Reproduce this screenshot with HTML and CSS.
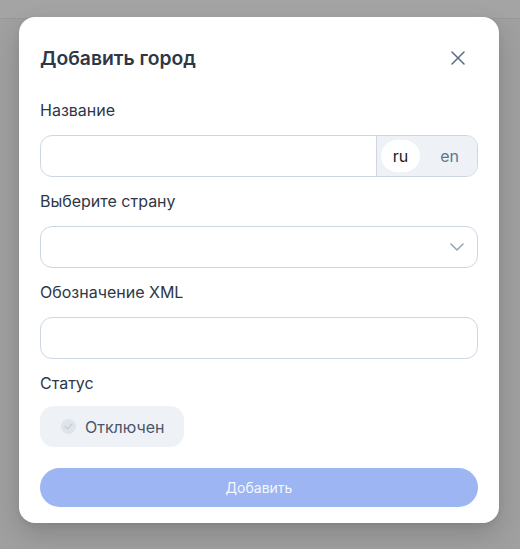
FILE: index.html
```html
<!DOCTYPE html>
<html lang="ru">
<head>
<meta charset="utf-8">
<link rel="stylesheet" href="styles.css">
</head>
<body>
<div class="page">
  <div class="page-header"></div>
</div>
<div class="overlay">
  <div class="modal">
    <div class="modal-head">
      <h2 class="modal-title">Добавить город</h2>
      <button class="close" aria-label="Закрыть">
        <svg width="14" height="14" viewBox="0 0 14 14"><path d="M1 1L13 13M13 1L1 13" stroke="#5b6b85" stroke-width="1.5" stroke-linecap="round"/></svg>
      </button>
    </div>

    <div class="field">
      <label class="label">Название</label>
      <div class="control control-lang">
        <input class="text-input" type="text">
        <div class="lang">
          <span class="lang-pill active">ru</span>
          <span class="lang-pill">en</span>
        </div>
      </div>
    </div>

    <div class="field">
      <label class="label">Выберите страну</label>
      <div class="control control-select">
        <svg class="chevron" width="14" height="8" viewBox="0 0 14 8"><path d="M1 1L7 7L13 1" fill="none" stroke="#94a3b8" stroke-width="1.5" stroke-linecap="round" stroke-linejoin="round"/></svg>
      </div>
    </div>

    <div class="field">
      <label class="label">Обозначение XML</label>
      <div class="control"><input class="text-input" type="text"></div>
    </div>

    <div class="field field-last">
      <label class="label label-status">Статус</label>
      <div class="status">
        <span class="status-dot">
          <svg width="9" height="7" viewBox="0 0 9 7"><path d="M1 3.5L3.5 6L8 1" fill="none" stroke="#c5ccd6" stroke-width="1.2" stroke-linecap="round" stroke-linejoin="round"/></svg>
        </span>
        <span class="status-text">Отключен</span>
      </div>
    </div>

    <button class="submit">Добавить</button>
  </div>
</div>
</body>
</html>
```

FILE: styles.css
```css
* { box-sizing: border-box; }
html, body { margin: 0; padding: 0; }
body {
  width: 520px;
  height: 549px;
  overflow: hidden;
  background: #a0a0a0;
  font-family: Inter, "Noto Sans", sans-serif;
  position: relative;
}
.page-header {
  height: 19px;
  background: #a4a4a4;
  border-bottom: 1px solid #999999;
}
.overlay {
  position: absolute;
  inset: 0;
  display: flex;
  justify-content: center;
  align-items: flex-start;
  padding-top: 17px;
  padding-right: 2px;
}
.modal {
  width: 480px;
  background: #ffffff;
  border-radius: 16px;
  box-shadow: 0 12px 28px rgba(0, 0, 0, 0.16), 0 2px 6px rgba(0, 0, 0, 0.06);
  padding: 27px 21px 16px 21px;
  display: flex;
  flex-direction: column;
}
.modal-head {
  display: flex;
  align-items: center;
  justify-content: space-between;
  height: 28px;
  margin-bottom: 26px;
}
.modal-title {
  margin: 0;
  font-size: 19.3px;
  line-height: 28px;
  font-weight: 600;
  color: #2d3748;
}
.close {
  border: 0;
  background: none;
  padding: 0;
  width: 14px;
  height: 14px;
  margin-right: 13px;
  display: flex;
}
.field {
  display: flex;
  flex-direction: column;
  margin-bottom: 12px;
}
.field-last { margin-bottom: 21px; }
.label {
  font-size: 16px;
  line-height: 24px;
  color: #2d3748;
  margin-bottom: 13px;
}
.label-status { margin-bottom: 11px; }
.control {
  height: 42px;
  border: 1px solid #cdd6e2;
  border-radius: 12px;
  display: flex;
  align-items: stretch;
  overflow: hidden;
  background: #fff;
}
.text-input {
  flex: 1;
  border: 0;
  outline: none;
  background: transparent;
  min-width: 0;
  font: inherit;
}
.lang {
  display: flex;
  align-items: center;
  gap: 8px;
  padding: 4px 6px 4px 4px;
  background: #eef2f7;
  border-left: 1px solid #cdd6e2;
}
.lang-pill {
  height: 32px;
  padding: 0 12px;
  border-radius: 16px;
  display: flex;
  align-items: center;
  font-size: 16px;
  color: #64748b;
}
.lang-pill.active {
  background: #ffffff;
  color: #1a1a1a;
}
.control-select {
  justify-content: flex-end;
  align-items: center;
  padding-right: 13px;
}
.status {
  align-self: flex-start;
  height: 41px;
  width: 144px;
  background: #eef2f7;
  border-radius: 14px;
  display: flex;
  align-items: center;
  padding-left: 21px;
}
.status-dot {
  width: 15px;
  height: 15px;
  border-radius: 50%;
  background: #dfe4ea;
  display: flex;
  align-items: center;
  justify-content: center;
  margin-right: 9px;
}
.status-text {
  font-size: 16px;
  color: #4a5568;
}
.submit {
  flex-shrink: 0;
  height: 39px;
  border: 0;
  border-radius: 20px;
  background: #9db5f3;
  color: rgba(255, 255, 255, 0.92);
  font-family: Inter, "Noto Sans", sans-serif;
  font-size: 14px;
}
```
